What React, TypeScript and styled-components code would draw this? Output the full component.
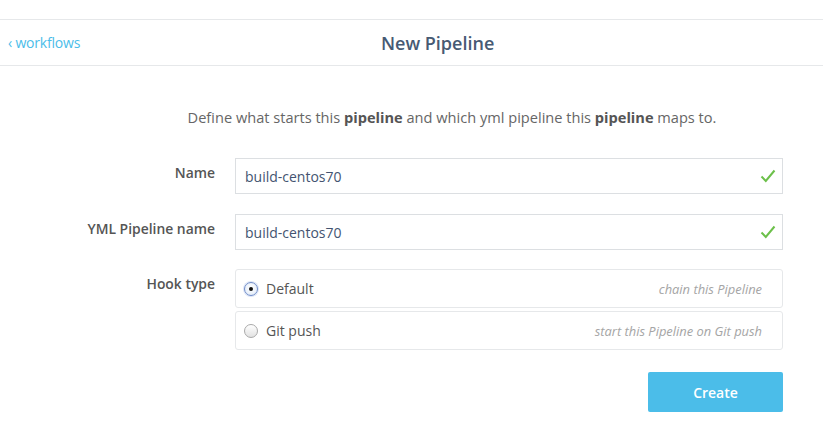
import React from "react";
import styled, { createGlobalStyle } from "styled-components";

const Global = createGlobalStyle`
  html, body { margin: 0; padding: 0; background: #fff; }
  body { font-family: "Open Sans", "Noto Sans", Arial, sans-serif; }
  * { box-sizing: border-box; }
`;

const Page = styled.div`
  width: 823px;
  height: 424px;
  background: #fff;
  padding-top: 19px;
`;

const Header = styled.header`
  display: flex;
  align-items: center;
  height: 47px;
  padding: 0 28px 0 8px;
  border-top: 1px solid #e6e8ea;
  border-bottom: 1px solid #e6e8ea;
`;

const BackLink = styled.a`
  flex: none;
  color: #4bbde9;
  font-size: 14px;
  text-decoration: none;
  letter-spacing: -0.2px;
`;

const Title = styled.h1`
  flex: 1;
  margin: 0;
  text-align: center;
  font-size: 18px;
  font-weight: 600;
  color: #475a73;
  letter-spacing: 0;
`;

const Body = styled.main`
  padding: 41px 40px 0 40px;
`;

const Intro = styled.p`
  margin: 0 0 31px;
  padding-left: 81px;
  text-align: center;
  font-size: 14.6px;
  color: #666;
  line-height: 20px;
  b { font-weight: 700; color: #555; }
`;

const Row = styled.div<{ $gap?: number }>`
  display: grid;
  grid-template-columns: 175px 1fr;
  column-gap: 20px;
  margin-bottom: ${(p) => p.$gap ?? 20}px;
`;

const Label = styled.label`
  text-align: right;
  font-size: 13.9px;
  font-weight: 600;
  color: #555;
  padding-top: 5px;
  white-space: nowrap;
`;

const InputBox = styled.div`
  position: relative;
  height: 36px;
  border: 1px solid #dcdfe2;
  display: flex;
  align-items: center;
  padding: 0 9px;
  font-size: 14px;
  color: #435471;
`;

const Check = styled.svg`
  position: absolute;
  right: 6px;
  top: 50%;
  transform: translateY(-50%);
`;

const Options = styled.div`
  display: flex;
  flex-direction: column;
  gap: 3px;
`;

const Option = styled.div`
  height: 39px;
  border: 1px solid #e6e8ea;
  border-radius: 3px;
  display: flex;
  align-items: center;
  padding: 0 20px 0 8px;
`;

const Radio = styled.span<{ $checked?: boolean }>`
  width: 14px;
  height: 14px;
  border-radius: 50%;
  flex: none;
  position: relative;
  border: 1px solid ${(p) => (p.$checked ? "#6f8cc9" : "#a9a9a9")};
  background: ${(p) =>
    p.$checked
      ? "radial-gradient(circle at 50% 40%, #fff 0%, #dde8f7 100%)"
      : "linear-gradient(#fff, #e2e2e2)"};
  box-shadow: ${(p) => (p.$checked ? "0 0 0 1px rgba(120,150,220,0.25)" : "none")};
  &::after {
    content: "";
    display: ${(p) => (p.$checked ? "block" : "none")};
    position: absolute;
    left: 50%;
    top: 50%;
    width: 4px;
    height: 4px;
    margin: -2px 0 0 -2px;
    border-radius: 50%;
    background: #111;
  }
`;

const OptionName = styled.span`
  margin-left: 8px;
  font-size: 14px;
  color: #555;
`;

const Hint = styled.span`
  margin-left: auto;
  font-size: 12.9px;
  font-style: italic;
  color: #a5a5a5;
`;

const Actions = styled.div`
  display: flex;
  justify-content: flex-end;
  margin-top: 22px;
`;

const Button = styled.button`
  width: 135px;
  height: 40px;
  border: none;
  border-radius: 2px;
  background: #4bbde9;
  color: #fff;
  font-family: inherit;
  font-size: 14px;
  font-weight: 600;
`;

const CheckIcon = () => (
  <Check width="16" height="14" viewBox="0 0 16 14">
    <path d="M1.5 7.5 L5.8 12 L14.5 1.5" fill="none" stroke="#6cc04a" strokeWidth="2" />
  </Check>
);

export default function App() {
  return (
    <Page>
      <Global />
      <Header>
        <BackLink href="#">‹ workflows</BackLink>
        <Title>New Pipeline</Title>
      </Header>
      <Body>
        <Intro>
          Define what starts this <b>pipeline</b> and which yml pipeline this <b>pipeline</b> maps to.
        </Intro>
        <Row>
          <Label>Name</Label>
          <InputBox>
            build-centos70
            <CheckIcon />
          </InputBox>
        </Row>
        <Row $gap={19}>
          <Label>YML Pipeline name</Label>
          <InputBox>
            build-centos70
            <CheckIcon />
          </InputBox>
        </Row>
        <Row $gap={0}>
          <Label>Hook type</Label>
          <Options>
            <Option>
              <Radio $checked />
              <OptionName>Default</OptionName>
              <Hint>chain this Pipeline</Hint>
            </Option>
            <Option>
              <Radio />
              <OptionName>Git push</OptionName>
              <Hint>start this Pipeline on Git push</Hint>
            </Option>
          </Options>
        </Row>
        <Actions>
          <Button>Create</Button>
        </Actions>
      </Body>
    </Page>
  );
}
